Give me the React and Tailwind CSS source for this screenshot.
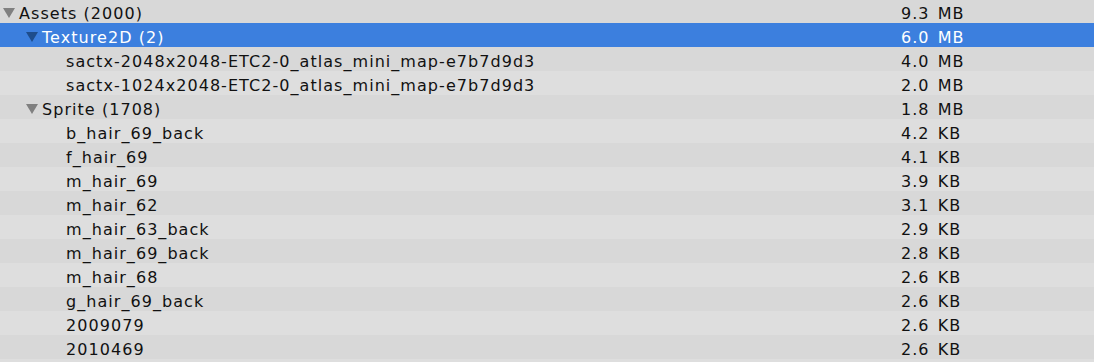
const rows = [
  { name: 'Assets (2000)', size: '9.3 MB', depth: 0, open: true },
  { name: 'Texture2D (2)', size: '6.0 MB', depth: 1, open: true, selected: true },
  { name: 'sactx-2048x2048-ETC2-0_atlas_mini_map-e7b7d9d3', size: '4.0 MB', depth: 2 },
  { name: 'sactx-1024x2048-ETC2-0_atlas_mini_map-e7b7d9d3', size: '2.0 MB', depth: 2 },
  { name: 'Sprite (1708)', size: '1.8 MB', depth: 1, open: true },
  { name: 'b_hair_69_back', size: '4.2 KB', depth: 2 },
  { name: 'f_hair_69', size: '4.1 KB', depth: 2 },
  { name: 'm_hair_69', size: '3.9 KB', depth: 2 },
  { name: 'm_hair_62', size: '3.1 KB', depth: 2 },
  { name: 'm_hair_63_back', size: '2.9 KB', depth: 2 },
  { name: 'm_hair_69_back', size: '2.8 KB', depth: 2 },
  { name: 'm_hair_68', size: '2.6 KB', depth: 2 },
  { name: 'g_hair_69_back', size: '2.6 KB', depth: 2 },
  { name: '2009079', size: '2.6 KB', depth: 2 },
  { name: '2010469', size: '2.6 KB', depth: 2 },
  { name: '', size: '', depth: 2 },
]

const indent = ['pl-[3px]', 'pl-[26px]', 'pl-[66px]']

function Arrow({ selected }) {
  return (
    <svg width="12" height="10" viewBox="0 0 12 10" className="mr-[4px] shrink-0">
      <path d="M0 0h12L6 10z" fill={selected ? '#1e4d8c' : '#808080'} />
    </svg>
  )
}

export default function App() {
  return (
    <div
      className="w-[1094px] h-[362px] overflow-hidden bg-[#dedede] text-[16px] tracking-[1.05px] text-[#111]"
      style={{ fontFamily: '"DejaVu Sans", Verdana, sans-serif' }}
    >
      <div className="-mt-px">
        {rows.map((r, i) => (
          <div
            key={i}
            className={`flex items-center h-[24px] pt-[4px] ${
              r.selected ? 'bg-[#3c7fde] text-white' : i % 2 === 0 ? 'bg-[#d8d8d8]' : 'bg-[#dedede]'
            }`}
          >
            <div className={`flex items-center w-[901px] ${indent[r.depth]}`}>
              {r.open && <Arrow selected={r.selected} />}
              <span className="whitespace-nowrap pt-[2px]">{r.name}</span>
            </div>
            <span className="whitespace-nowrap pt-[2px] [word-spacing:2px]">{r.size}</span>
          </div>
        ))}
      </div>
    </div>
  )
}
